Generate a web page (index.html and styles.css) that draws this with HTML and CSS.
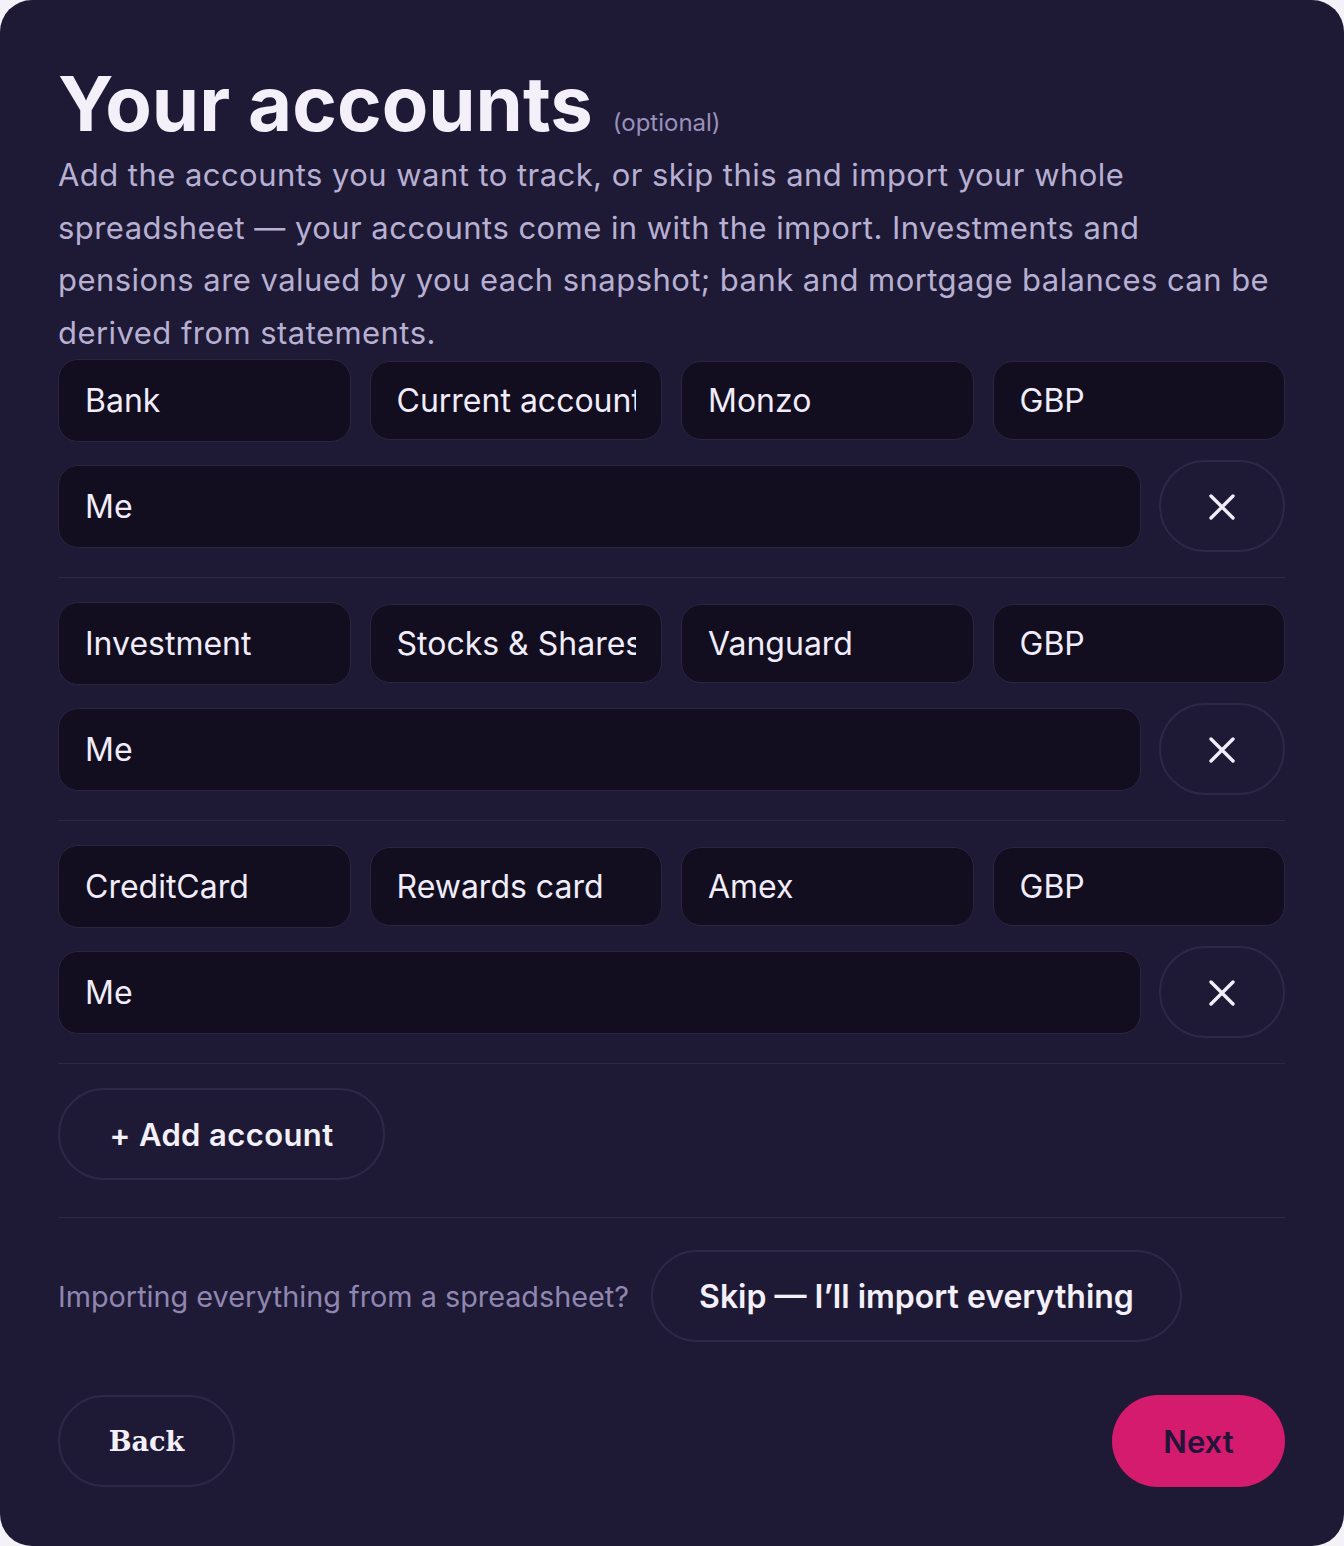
FILE: index.html
```html
<!DOCTYPE html>
<html lang="en">
<head>
<meta charset="utf-8">
<title>Your accounts</title>
<link rel="stylesheet" href="styles.css">
</head>
<body>
<main class="card">
  <header class="head">
    <h1 class="title">Your accounts <span class="opt">(optional)</span></h1>
    <p class="lede">Add the accounts you want to track, or skip this and import your whole spreadsheet — your accounts come in with the import. Investments and pensions are valued by you each snapshot; bank and mortgage balances can be derived from statements.</p>
  </header>

  <section class="accounts">
    <div class="account">
      <div class="fields">
        <input class="field select" readonly value="Bank">
        <input class="field" readonly value="Current account">
        <input class="field" readonly value="Monzo">
        <input class="field" readonly value="GBP">
      </div>
      <div class="owner-row">
        <input class="field owner" readonly value="Me">
        <button class="remove" aria-label="Remove account"><svg viewBox="0 0 26 26" width="26" height="26"><path d="M2 2 L24 24 M24 2 L2 24" stroke="#f1edf9" stroke-width="3.4" stroke-linecap="round" fill="none"/></svg></button>
      </div>
    </div>
    <div class="account">
      <div class="fields">
        <input class="field select" readonly value="Investment">
        <input class="field" readonly value="Stocks &amp; Shares ISA">
        <input class="field" readonly value="Vanguard">
        <input class="field" readonly value="GBP">
      </div>
      <div class="owner-row">
        <input class="field owner" readonly value="Me">
        <button class="remove" aria-label="Remove account"><svg viewBox="0 0 26 26" width="26" height="26"><path d="M2 2 L24 24 M24 2 L2 24" stroke="#f1edf9" stroke-width="3.4" stroke-linecap="round" fill="none"/></svg></button>
      </div>
    </div>
    <div class="account">
      <div class="fields">
        <input class="field select" readonly value="CreditCard">
        <input class="field" readonly value="Rewards card">
        <input class="field" readonly value="Amex">
        <input class="field" readonly value="GBP">
      </div>
      <div class="owner-row">
        <input class="field owner" readonly value="Me">
        <button class="remove" aria-label="Remove account"><svg viewBox="0 0 26 26" width="26" height="26"><path d="M2 2 L24 24 M24 2 L2 24" stroke="#f1edf9" stroke-width="3.4" stroke-linecap="round" fill="none"/></svg></button>
      </div>
    </div>
  </section>

  <div class="add-wrap">
    <button class="pill add">+ Add account</button>
  </div>

  <div class="import-row">
    <span class="import-q">Importing everything from a spreadsheet?</span>
    <button class="pill skip">Skip — I’ll import everything</button>
  </div>

  <footer class="nav">
    <button class="pill back">Back</button>
    <button class="next">Next</button>
  </footer>
</main>
</body>
</html>
```

FILE: styles.css
```css
html, body {
  margin: 0;
  padding: 0;
  background: #f4f2f8;
}

body {
  font-family: Inter, "Noto Sans", sans-serif;
}

.card {
  box-sizing: border-box;
  width: 1344px;
  height: 1546px;
  padding: 61px 59px 59px 58px;
  background: #1e1935;
  border-radius: 32px;
  display: flex;
  flex-direction: column;
}

.title {
  margin: 0;
  font-size: 76px;
  line-height: 84px;
  height: 84px;
  font-weight: 700;
  letter-spacing: 0;
  color: #f3f0fa;
  white-space: nowrap;
}

.opt {
  margin-left: 2px;
  font-size: 24px;
  line-height: 24px;
  font-weight: 400;
  letter-spacing: 0;
  color: #9a91bb;
}

.lede {
  margin: 4px 0 0;
  padding-right: 8px;
  font-size: 31px;
  line-height: 52.5px;
  letter-spacing: 0.45px;
  color: #b7b0d2;
}

.account {
  padding: 0 0 25px;
  border-bottom: 1px solid #2d2846;
}

.account + .account {
  padding-top: 24px;
}

.fields {
  display: grid;
  grid-template-columns: repeat(4, 1fr);
  column-gap: 19px;
  align-items: center;
  height: 83px;
}

.field {
  box-sizing: border-box;
  width: 100%;
  min-width: 0;
  height: 79px;
  margin: 0;
  padding: 0 25px 0 26px;
  border: 1.5px solid #2a2541;
  border-radius: 20px;
  background: #120e1f;
  color: #f0ecf9;
  font-family: Inter, "Noto Sans", sans-serif;
  font-size: 32px;
  outline: none;
}

.field.select {
  height: 83px;
}

.owner-row {
  margin-top: 18px;
  display: flex;
  align-items: center;
  gap: 18px;
  height: 92px;
}

.field.owner {
  flex: 1;
  height: 83px;
}

.remove {
  flex: 0 0 126px;
  height: 92px;
  box-sizing: border-box;
  border: 2px solid #2e2848;
  border-radius: 46px;
  background: transparent;
  display: flex;
  align-items: center;
  justify-content: center;
  padding: 0;
}

.remove svg {
  display: block;
  margin-top: 2px;
}

.pill {
  box-sizing: border-box;
  height: 92px;
  border: 2px solid #2e2848;
  border-radius: 46px;
  background: transparent;
  color: #f3f0fa;
  font-family: Inter, "Noto Sans", sans-serif;
  font-weight: 600;
  font-size: 31px;
  padding: 0 48px;
}

.add-wrap {
  padding: 24px 0 37px;
  border-bottom: 1px solid #2d2846;
}

.add {
  width: 327px;
  padding: 0;
  letter-spacing: 0.4px;
}

.import-row {
  margin-top: 32px;
  display: flex;
  align-items: center;
  gap: 22px;
}

.import-q {
  font-size: 28.8px;
  color: #9087b1;
}

.skip {
  width: 531px;
  padding: 0;
  font-size: 32px;
}

.nav {
  margin-top: auto;
  display: flex;
  justify-content: space-between;
  align-items: center;
}

.back {
  width: 177px;
  padding: 0;
  font-family: "DejaVu Serif", serif;
  font-weight: 700;
  font-size: 27px;
}

.next {
  box-sizing: border-box;
  width: 173px;
  height: 92px;
  border: none;
  border-radius: 46px;
  background: #d51b6e;
  color: #22153a;
  font-family: Inter, "Noto Sans", sans-serif;
  font-weight: 600;
  font-size: 31px;
  padding: 0;
}
```
